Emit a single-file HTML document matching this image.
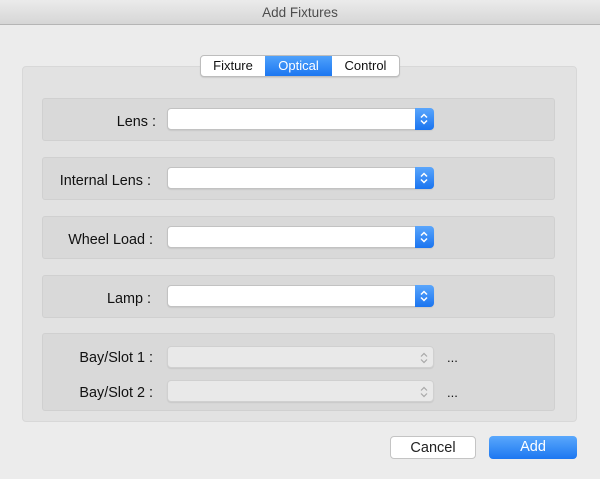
<!DOCTYPE html>
<html><head><style>
*{margin:0;padding:0;box-sizing:border-box}
body{width:600px;height:479px;background:#ececec;font-family:"Liberation Sans",sans-serif;font-size:13px;color:#111;position:relative;overflow:hidden}
.title{position:absolute;left:0;top:0;width:600px;height:25px;background:linear-gradient(#ebebeb,#d6d6d6);border-bottom:1px solid #b5b5b5;text-align:center;line-height:25px;color:#4d4d4d;font-size:13.5px}
.group{position:absolute;left:22px;top:66px;width:555px;height:356px;background:#e2e2e2;border:1px solid #d8d8d8;border-radius:4px}
.tabs{position:absolute;left:200px;top:55px;height:22px;display:flex;border:1px solid #bdbdbd;border-radius:4px;background:#fff;overflow:hidden;box-shadow:0 1px 1px rgba(0,0,0,.1)}
.tabs div{line-height:20px;text-align:center}
.box{position:absolute;left:42px;width:513px;background:#d9d9d9;border:1px solid #d0d0d0;border-radius:3px}
.lab{position:absolute;text-align:right;white-space:nowrap;font-size:14.4px}
.pop{position:absolute;left:167px;width:267px;height:22px;background:#fff;border:1px solid #c2c2c2;border-radius:4px;box-shadow:0 1px 1px rgba(0,0,0,.08)}
.pop .b{position:absolute;right:-1px;top:-1px;width:19px;height:22px;background:linear-gradient(#5aa6fc,#1a74f0);border-radius:0 4px 4px 0}
.pop.dis{background:#e9e9e9;border-color:#d0d0d0}
.pop svg{position:absolute;right:4px;top:5px}
.dots{position:absolute;left:447px;font-size:13px}
.btn{position:absolute;top:436px;height:23px;border-radius:4px;text-align:center;line-height:23px;font-size:14.5px}
</style></head><body>
<div class="title">Add Fixtures</div>
<div class="group"></div>
<div class="tabs"><div style="width:64px">Fixture</div><div style="width:67px;background:linear-gradient(#4fa1fb,#1c77f1);color:#fff">Optical</div><div style="width:67px">Control</div></div>

<div class="box" style="top:98px;height:43px"></div>
<div class="lab" style="top:114px;right:444px">Lens :</div>
<div class="pop" style="top:108px"><div class="b"><svg width="10" height="12" viewBox="0 0 10 12" style="right:5px"><path d="M2 4.5L5 1.5 8 4.5M2 7.5L5 10.5 8 7.5" stroke="#fff" stroke-width="1.5" fill="none"/></svg></div></div>

<div class="box" style="top:157px;height:43px"></div>
<div class="lab" style="top:173px;right:449px">Internal Lens :</div>
<div class="pop" style="top:167px"><div class="b"><svg width="10" height="12" viewBox="0 0 10 12" style="right:5px"><path d="M2 4.5L5 1.5 8 4.5M2 7.5L5 10.5 8 7.5" stroke="#fff" stroke-width="1.5" fill="none"/></svg></div></div>

<div class="box" style="top:216px;height:43px"></div>
<div class="lab" style="top:232px;right:447px">Wheel Load :</div>
<div class="pop" style="top:226px"><div class="b"><svg width="10" height="12" viewBox="0 0 10 12" style="right:5px"><path d="M2 4.5L5 1.5 8 4.5M2 7.5L5 10.5 8 7.5" stroke="#fff" stroke-width="1.5" fill="none"/></svg></div></div>

<div class="box" style="top:275px;height:43px"></div>
<div class="lab" style="top:291px;right:449px">Lamp :</div>
<div class="pop" style="top:285px"><div class="b"><svg width="10" height="12" viewBox="0 0 10 12" style="right:5px"><path d="M2 4.5L5 1.5 8 4.5M2 7.5L5 10.5 8 7.5" stroke="#fff" stroke-width="1.5" fill="none"/></svg></div></div>

<div class="box" style="top:333px;height:78px"></div>
<div class="lab" style="top:350px;right:447px">Bay/Slot 1 :</div>
<div class="pop dis" style="top:346px"><svg width="10" height="12" viewBox="0 0 10 12"><path d="M2 4.5L5 1.5 8 4.5M2 7.5L5 10.5 8 7.5" stroke="#a8a8a8" stroke-width="1.2" fill="none"/></svg></div>
<div class="dots" style="top:350px">...</div>
<div class="lab" style="top:385px;right:447px">Bay/Slot 2 :</div>
<div class="pop dis" style="top:380px"><svg width="10" height="12" viewBox="0 0 10 12"><path d="M2 4.5L5 1.5 8 4.5M2 7.5L5 10.5 8 7.5" stroke="#a8a8a8" stroke-width="1.2" fill="none"/></svg></div>
<div class="dots" style="top:385px">...</div>

<div class="btn" style="left:390px;width:86px;background:#fff;border:1px solid #c4c4c4;color:#222">Cancel</div>
<div class="btn" style="left:489px;width:88px;background:linear-gradient(#5aa8fc,#1c77f1);color:#fff">Add</div>
</body></html>
